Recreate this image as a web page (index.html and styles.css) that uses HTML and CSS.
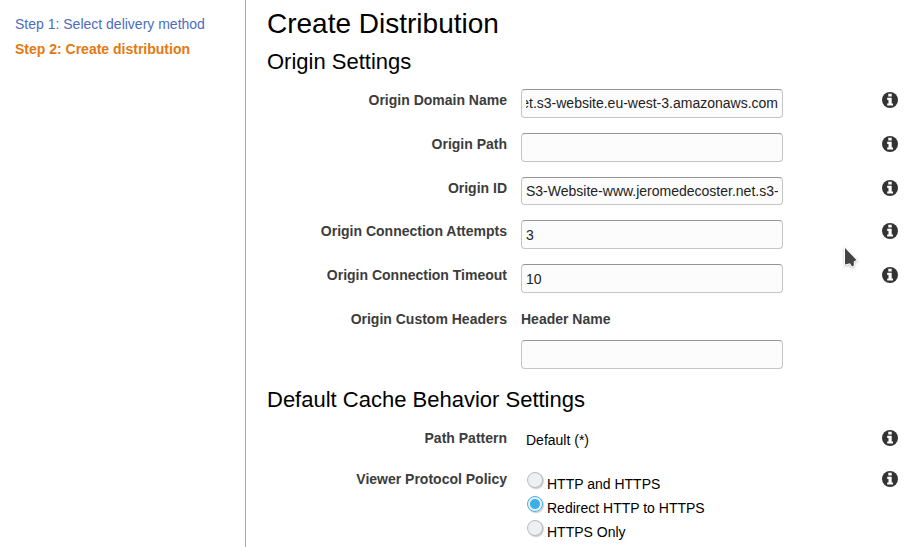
FILE: index.html
```html
<!DOCTYPE html>
<html lang="en">
<head>
<meta charset="utf-8">
<title>Create Distribution</title>
<link rel="stylesheet" href="styles.css">
</head>
<body>
<svg class="defs" width="0" height="0">
  <symbol id="info" viewBox="0 0 16 16">
    <circle cx="8" cy="8" r="8" fill="#333"/>
    <path fill="#fff" d="M6.300 1.800h3.400v2.600H6.300zM5.200 5.800h4.500v5.600h1.300v2.100H5.200v-2.100h1.300V7.900H5.200z"/>
  </symbol>
</svg>
<div class="layout">
  <nav class="steps">
    <a class="step">Step 1: Select delivery method</a>
    <a class="step current">Step 2: Create distribution</a>
  </nav>
  <main class="content">
    <h1>Create Distribution</h1>
    <h2>Origin Settings</h2>
    <section class="rows">
      <div class="row"><label>Origin Domain Name</label><div class="input scrolled"><span class="value">et.s3-website.eu-west-3.amazonaws.com</span></div><svg class="info"><use href="#info"/></svg></div>
      <div class="row"><label>Origin Path</label><div class="input"></div><svg class="info"><use href="#info"/></svg></div>
      <div class="row"><label>Origin ID</label><div class="input short"><span class="value">S3-Website-www.jeromedecoster.net.s3-</span></div><svg class="info"><use href="#info"/></svg></div>
      <div class="row"><label>Origin Connection Attempts</label><div class="input"><span class="value low">3</span></div><svg class="info"><use href="#info"/></svg></div>
      <div class="row"><label>Origin Connection Timeout</label><div class="input"><span class="value low">10</span></div><svg class="info"><use href="#info"/></svg></div>
      <div class="row headers"><label>Origin Custom Headers</label><div><div class="header-name">Header Name</div><div class="input"></div></div></div>
    </section>
    <h2 class="cache">Default Cache Behavior Settings</h2>
    <section class="rows">
      <div class="row pattern"><label>Path Pattern</label><div class="static">Default (*)</div><svg class="info"><use href="#info"/></svg></div>
      <div class="row"><label>Viewer Protocol Policy</label>
        <div class="radios">
          <div class="option"><i class="radio"></i><span>HTTP and HTTPS</span></div>
          <div class="option"><i class="radio checked"></i><span>Redirect HTTP to HTTPS</span></div>
          <div class="option"><i class="radio"></i><span>HTTPS Only</span></div>
        </div><svg class="info"><use href="#info"/></svg></div>
    </section>
  </main>
</div>
<svg class="cursor" width="20" height="28" viewBox="0 0 20 28"><path d="M2 2v16.500l5-1.200 2 3.200 1.800-1v-4l2.700-1.500z" fill="#444" stroke="#fff" stroke-width="2" paint-order="stroke"/></svg>
</body>
</html>
```
FILE: styles.css
```css
* { box-sizing: border-box; }
body {
  margin: 0;
  background: #fff;
  color: #000;
  font: 14px/22px "Liberation Sans", Arial, sans-serif;
  overflow: hidden;
}
.defs { display: block; height: 0; }
.layout { display: flex; height: 547px; }
.steps {
  width: 246px;
  flex: none;
  padding: 12px 0 0 15px;
  border-right: 1px solid #aaa;
}
.step { display: block; margin-bottom: 1px; line-height: 24px; color: #4d6cc0; }
.step.current { color: #e47911; font-weight: bold; }
.content { flex: none; width: 667px; padding: 7px 0 0 21px; }
h1 { margin: 0; font-size: 28px; font-weight: normal; line-height: 34px; }
h2 { margin: 7px 0 13px; font-size: 22px; font-weight: normal; line-height: 28px; }
.row {
  display: grid;
  grid-template-columns: 240px 262px 16px;
  column-gap: 14px;
  height: 43.75px;
  align-items: start;
}
label, .header-name { color: #3c3c3c; font-weight: bold; }
label { text-align: right; }
.input {
  display: flex;
  height: 29px;
  padding: 0 4px;
  border: 1px solid #c4c4c4;
  border-top-color: #949494;
  border-radius: 4px;
  background: #fcfcfc;
  color: #222;
}
.input.short { height: 28px; }
.value {
  display: flex;
  width: 100%;
  overflow: hidden;
  white-space: nowrap;
  line-height: 27px;
}
.value.low { padding-top: 1px; }
.scrolled .value { justify-content: flex-end; }
.info { width: 16px; height: 16px; margin: 3px 0 0 85px; }
.row.headers { height: 72px; }
.header-name { margin-bottom: 10px; }
h2.cache { margin: 6px 0 13px; }
.row.pattern { height: 41px; }
.static { padding: 2px 0 0 5px; }
.radios { padding: 4px 0 0 6px; }
.option { display: flex; height: 24px; gap: 4px; white-space: nowrap; }
.option span { line-height: 24px; }
.radio {
  flex: none;
  width: 16px;
  height: 16px;
  border: 1px solid #bbb;
  border-radius: 50%;
  background: #eeeff1;
  box-shadow: 1px 1px 1px #ccc;
}
.radio.checked {
  border-color: #3daee9;
  background: radial-gradient(circle, #3daee9 4.500px, #eff0f1 5.500px);
}
.cursor {
  position: absolute;
  left: 843px;
  top: 246px;
  filter: drop-shadow(0 1px 1px rgba(0, 0, 0, .25));
}
```
